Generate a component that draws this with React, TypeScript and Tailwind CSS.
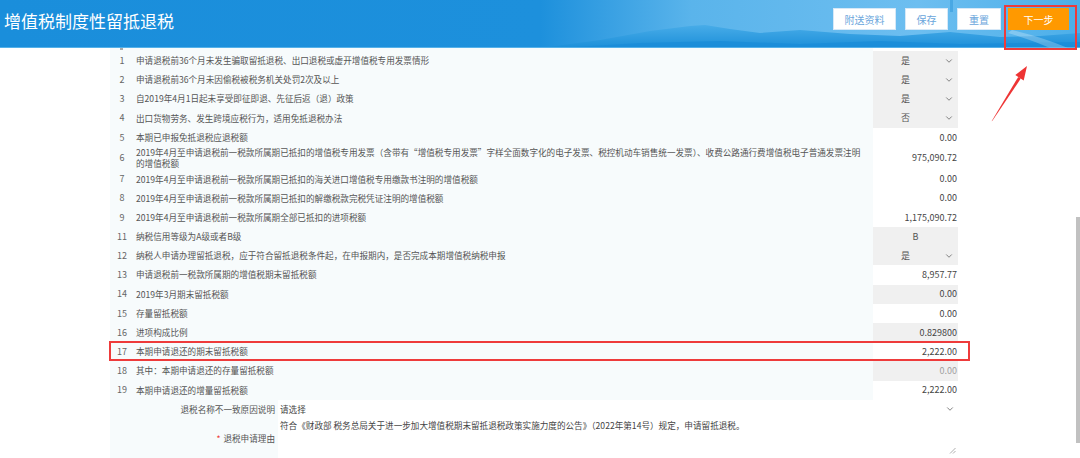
import { ChevronDown } from "lucide-react";

type Row = {
  no: string;
  label: string;
  kind: "select" | "input" | "readonly" | "center";
  value: string;
  tall?: boolean;
  dim?: boolean;
  marked?: boolean;
};

const rows: Row[] = [
  { no: "1", label: "申请退税前36个月未发生骗取留抵退税、出口退税或虚开增值税专用发票情形", kind: "select", value: "是" },
  { no: "2", label: "申请退税前36个月未因偷税被税务机关处罚2次及以上", kind: "select", value: "是" },
  { no: "3", label: "自2019年4月1日起未享受即征即退、先征后返（退）政策", kind: "select", value: "是" },
  { no: "4", label: "出口货物劳务、发生跨境应税行为，适用免抵退税办法", kind: "select", value: "否" },
  { no: "5", label: "本期已申报免抵退税应退税额", kind: "input", value: "0.00" },
  {
    no: "6",
    label:
      "2019年4月至申请退税前一税款所属期已抵扣的增值税专用发票（含带有“增值税专用发票”字样全面数字化的电子发票、税控机动车销售统一发票）、收费公路通行费增值税电子普通发票注明",
    kind: "input",
    value: "975,090.72",
    tall: true,
  },
  { no: "7", label: "2019年4月至申请退税前一税款所属期已抵扣的海关进口增值税专用缴款书注明的增值税额", kind: "input", value: "0.00" },
  { no: "8", label: "2019年4月至申请退税前一税款所属期已抵扣的解缴税款完税凭证注明的增值税额", kind: "input", value: "0.00" },
  { no: "9", label: "2019年4月至申请退税前一税款所属期全部已抵扣的进项税额", kind: "input", value: "1,175,090.72" },
  { no: "11", label: "纳税信用等级为A级或者B级", kind: "center", value: "B" },
  { no: "12", label: "纳税人申请办理留抵退税，应于符合留抵退税条件起，在申报期内，是否完成本期增值税纳税申报", kind: "select", value: "是" },
  { no: "13", label: "申请退税前一税款所属期的增值税期末留抵税额", kind: "input", value: "8,957.77" },
  { no: "14", label: "2019年3月期末留抵税额", kind: "readonly", value: "0.00" },
  { no: "15", label: "存量留抵税额", kind: "input", value: "0.00" },
  { no: "16", label: "进项构成比例", kind: "readonly", value: "0.829800" },
  { no: "17", label: "本期申请退还的期末留抵税额", kind: "input", value: "2,222.00", marked: true },
  { no: "18", label: "其中：本期申请退还的存量留抵税额", kind: "readonly", value: "0.00", dim: true },
  { no: "19", label: "本期申请退还的增量留抵税额", kind: "input", value: "2,222.00" },
];

function ValueCell({ row }: { row: Row }) {
  if (row.kind === "select") {
    return (
      <div className="flex w-[85px] items-center bg-[#f0f0f0] text-[9px] text-[#555]">
        <span className="flex-1 pr-[6px] text-center">{row.value}</span>
        <ChevronDown size={10} strokeWidth={2.2} className="mr-[4px] text-[#777]" />
      </div>
    );
  }
  if (row.kind === "center") {
    return (
      <div className="flex w-[85px] items-center justify-center bg-[#f0f0f0] text-[9px] text-[#555]">
        {row.value}
      </div>
    );
  }
  return (
    <div
      className={`flex w-[85px] items-center justify-end pr-[1px] text-[9px] ${
        row.kind === "readonly" ? "bg-[#f0f0f0]" : "bg-white"
      } ${row.dim ? "text-[#a0a0a0]" : "text-[#444]"}`}
    >
      {row.value}
    </div>
  );
}

function TableRow({ row }: { row: Row }) {
  return (
    <div className={`relative flex w-[848px] ${row.tall ? "h-[22.5px]" : "h-[19.2px]"}`}>
      <div className="flex w-[763px] items-center bg-[#f7fbfc] text-[#555]">
        <span className="w-[24px] shrink-0 text-center text-[9px] text-[#666]">{row.no}</span>
        <span className="whitespace-nowrap pl-[2px] text-[8.6px] leading-[11px]">
          {row.tall ? (
            <>
              {row.label}
              <br />
              的增值税额
            </>
          ) : (
            row.label
          )}
        </span>
      </div>
      <ValueCell row={row} />
      {row.marked && (
        <span className="absolute -left-[1px] -right-[12px] -top-[1px] bottom-0 border-2 border-[#ee3b3b]" />
      )}
    </div>
  );
}

function Header() {
  return (
    <header className="relative flex h-[48px] items-start justify-between pt-[8px] pr-[11px] pl-[4px]">
      <svg className="absolute inset-0" width="1080" height="48" viewBox="0 0 1080 48">
        <defs>
          <linearGradient id="sky" x1="0" y1="0" x2="1" y2="0">
            <stop offset="0" stopColor="#1a8edb" />
            <stop offset="0.5" stopColor="#1d90dc" />
            <stop offset="0.64" stopColor="#5ab4eb" />
            <stop offset="0.85" stopColor="#6dbef0" />
            <stop offset="1" stopColor="#4cafe9" />
          </linearGradient>
          <linearGradient id="mtn" x1="0" y1="0" x2="0" y2="1">
            <stop offset="0" stopColor="#48ace8" />
            <stop offset="1" stopColor="#1c8fd9" />
          </linearGradient>
        </defs>
        <rect width="1080" height="48" fill="url(#sky)" />
        <rect x="950" y="0" width="3" height="12" fill="#3d9fe0" opacity="0.7" />
        <path
          d="M540 48 L600 40 L650 31 L690 26 L705 25 L730 29 L760 33 L800 30 L850 34 L900 36 L950 32 L1000 37 L1040 36 L1080 33 L1080 48 Z"
          fill="url(#mtn)"
        />
        <path d="M560 48 L640 43 L720 41 L800 44 L880 41 L960 44 L1080 42 L1080 48 Z" fill="#1a8cd8" opacity="0.8" />
        <path d="M1012 30 Q1042 37 1068 48 L1050 48 Q1032 40 1008 33 Z" fill="#ffffff" opacity="0.25" />
        <rect x="0" y="47" width="1080" height="1" fill="#7cc8f2" opacity="0.6" />
      </svg>
      <h1 className="relative text-[17px] leading-[26px] text-white">增值税制度性留抵退税</h1>
      <div className="relative flex gap-[9px] text-[10px]">
        <button className="h-[22px] w-[63px] border border-[#d6e8f7] bg-white text-[#6aa6dc]">附送资料</button>
        <button className="h-[22px] w-[43px] border border-[#d6e8f7] bg-white text-[#6aa6dc]">保存</button>
        <button className="h-[22px] w-[44px] border border-[#d6e8f7] bg-white text-[#6aa6dc]">重置</button>
        <button className="-ml-[2px] h-[22px] w-[61px] bg-[#ff9900] text-white">下一步</button>
      </div>
    </header>
  );
}

export default function App() {
  return (
    <div className="relative h-[458px] w-[1080px] overflow-hidden bg-white font-['Noto_Sans_CJK_SC','Noto_Sans',sans-serif]">
      <Header />

      <div className="pl-[110px]">
        <div className="flex h-[3px]">
          <div className="w-[763px] bg-[#f7fbfc] pl-[10px]">
            <span className="block h-[2px] w-[3px] bg-[#aaa]" />
          </div>
        </div>
        {rows.map((row) => (
          <TableRow key={row.no} row={row} />
        ))}

        <div className="flex h-[19px] text-[8.6px]">
          <div className="flex w-[168px] items-center justify-end bg-[#f7fbfc] pr-[3px] text-[#555]">
            退税名称不一致原因说明
          </div>
          <div className="flex w-[680px] items-center pl-[2px] text-[#444]">
            <span className="flex-1">请选择</span>
            <ChevronDown size={10} strokeWidth={2.2} className="mr-[3px] text-[#777]" />
          </div>
        </div>
        <div className="flex h-[40px] text-[8.6px]">
          <div className="flex w-[168px] items-center justify-end bg-[#f7fbfc] pr-[3px] text-[#555]">
            <span className="mr-[3px] text-[#e33]">*</span>退税申请理由
          </div>
          <div className="relative w-[680px] border-b border-[#e6e6e6] pl-[2px] pt-[1px] leading-[11px] text-[#444]">
            符合《财政部 税务总局关于进一步加大增值税期末留抵退税政策实施力度的公告》（2022年第14号）规定，申请留抵退税。
            <svg className="absolute bottom-[4px] right-[2px]" width="7" height="7" viewBox="0 0 7 7">
              <path d="M1 6.5 L6.5 1 M4 6.5 L6.5 4" stroke="#999" strokeWidth="0.8" />
            </svg>
          </div>
        </div>
      </div>

      {/* red highlight round the next-step button */}
      <span className="absolute left-[1004px] top-[5px] h-[45px] w-[73px] border-2 border-[#ee3b3b]" />

      {/* arrow */}
      <svg className="absolute left-0 top-0" width="1080" height="458" viewBox="0 0 1080 458">
        <polygon points="991.6,121.3 992.4,120.7 1020.8,78.6 1018.2,77" fill="#ee3434" />
        <polygon points="1027,66 1023.7,80.5 1015.3,75.1" fill="#ee3434" />
      </svg>

      {/* scrollbar */}
      <span className="absolute left-[1076px] top-[217px] h-[226px] w-[4px] bg-[#c1c1c1]" />
    </div>
  );
}
